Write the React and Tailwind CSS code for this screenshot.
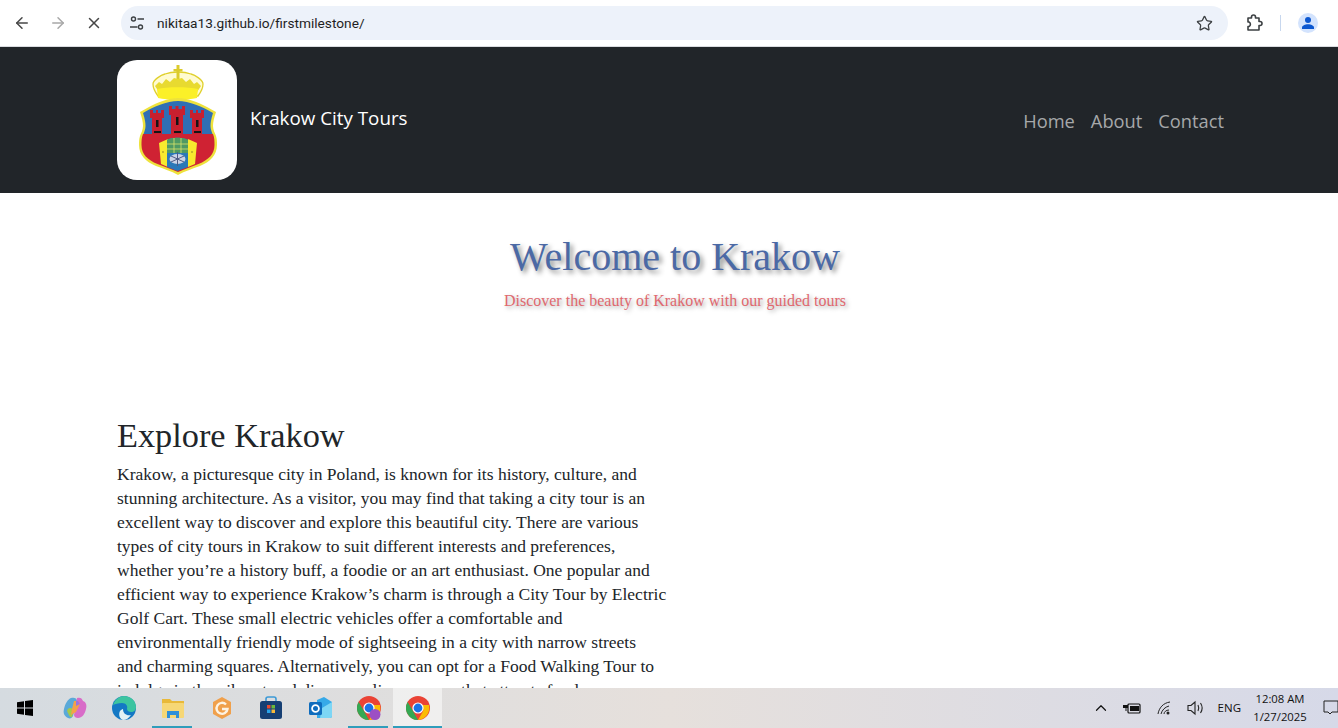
import React from 'react';
import { ArrowLeft, ArrowRight, X, Star, ChevronUp } from 'lucide-react';

const SERIF = "font-['Liberation_Serif',serif]";

const INTRO_LINES = [
  'Krakow, a picturesque city in Poland, is known for its history, culture, and',
  'stunning architecture. As a visitor, you may find that taking a city tour is an',
  'excellent way to discover and explore this beautiful city. There are various',
  'types of city tours in Krakow to suit different interests and preferences,',
  'whether you’re a history buff, a foodie or an art enthusiast. One popular and',
  'efficient way to experience Krakow’s charm is through a City Tour by Electric',
  'Golf Cart. These small electric vehicles offer a comfortable and',
  'environmentally friendly mode of sightseeing in a city with narrow streets',
  'and charming squares. Alternatively, you can opt for a Food Walking Tour to',
  'indulge in the vibrant and diverse culinary scene that attracts food',
];

const TuneIcon = () => (
  <svg width="16" height="16" viewBox="0 0 16 16" fill="none" stroke="#3c4043" strokeWidth="1.4">
    <circle cx="4.5" cy="4" r="2" />
    <path d="M8.5 4H15M1 12h7.5" />
    <circle cx="11.5" cy="12" r="2" />
  </svg>
);

const PuzzleIcon = () => (
  <svg width="18" height="18" viewBox="0 0 18 18" fill="none" stroke="#3c4043" strokeWidth="1.6" strokeLinejoin="round">
    <path d="M2 4h3.5V3a2 2 0 0 1 4 0v1H13v3.5h1a2 2 0 0 1 0 4h-1V16H2v-3.5h1a2.5 2.5 0 0 0 0-4.5H2V4z" />
  </svg>
);

const ProfileIcon = () => (
  <div className="flex h-5 w-5 items-center justify-center rounded-full bg-[#d3e3fd]">
    <svg width="14" height="14" viewBox="0 0 14 14" fill="#0b57d0">
      <circle cx="7" cy="4" r="3" />
      <path d="M1 13v-1.5C1 9.5 4 8.2 7 8.2s6 1.3 6 3.3V13H1z" />
    </svg>
  </div>
);

const BrowserBar = () => (
  <div className="flex h-[46px] shrink-0 items-center bg-white pl-[13px]">
    <ArrowLeft size={18} color="#474747" strokeWidth={2} />
    <ArrowRight size={18} color="#a8a8a8" strokeWidth={2} className="ml-[18px]" />
    <X size={18} color="#474747" strokeWidth={2} className="ml-[18px]" />
    <div className="ml-[18px] flex h-[34px] w-[1107px] items-center rounded-full bg-[#edf2fa] pl-[8px] pr-[15px]">
      <TuneIcon />
      <span className="ml-[12px] font-['Roboto',sans-serif] text-[13.7px] text-[#1f1f1f]">
        nikitaa13.github.io/firstmilestone/
      </span>
      <Star size={17} color="#3c4043" strokeWidth={1.8} className="ml-auto" />
    </div>
    <div className="ml-[18px]"><PuzzleIcon /></div>
    <div className="ml-[16px] h-[16px] w-px bg-[#c7d7ee]" />
    <div className="ml-[17px]"><ProfileIcon /></div>
  </div>
);

const Crest = () => (
  <svg width="120" height="120" viewBox="0 0 120 120">
    <rect width="120" height="120" rx="20" fill="#fff" />
    {/* crown */}
    <path d="M41 36c-3-4-5-9-5-12 0-4 8-9 12-10 4-1.500 8-2 13-2s9 .5 13 2c4 1 12 6 12 10 0 3-2 8-5 12z" fill="#fffbd0" stroke="#e0d02c" strokeWidth="1.300" />
    <path d="M59.500 5h3v4h3v2.500h-3V20h-3v-8.500h-3V9h3z" fill="#dccb2c" />
    <path d="M38 26l4-4 3 2 4-5 4 3 4-4 4 1 4-1 4 4 4-3 4 5 3-2 4 4-4 6H42z" fill="#e8da30" />
    <path d="M40 29c10-2.500 31-2.500 41 0l-1 9c-10 2-30 2-39 0z" fill="#fbf028" />
    {/* shield */}
    <path d="M23 52c3-2 6-3 9-5 9-5 20-9 29-9s20 4 29 9c3 2 6 3 9 5-2 6-3 10-3 14 0 4 2 7 3 10 1 3 1 6 1 9 0 10-7 17-17 21-8 3-15 5-22 9-7-4-14-6-22-9-10-4-17-11-17-21 0-3 0-6 1-9 1-3 3-6 3-10 0-4-1-8-3-14z" fill="#eee23c" />
    <path d="M26 53c10-6 24-12 35-12s25 6 35 12c-2 6-2.500 10-2.500 13 0 3 1 5 2 8H26.500c1-3 2-5 2-8 0-3-.5-7-2.500-13z" fill="#2f6fb4" />
    <path d="M26 74h70c1.500 4 1.500 7 1.500 11 0 9-6 15-16 19-7 3-14 5-20.500 8-6.500-3-13.500-5-20.500-8-10-4-16-10-16-19 0-4 0-7 1.500-11z" fill="#cf2233" />
    {/* towers */}
    <g fill="#c8202f">
      <path d="M33 50h3v3h3v-3h2v3h3v-3h3v8h-2v16H35V58h-2z" />
      <path d="M52 46h3v3h3.500v-3h3v3H65v-3h3v9h-2v19H54V55h-2z" />
      <path d="M73 50h3v3h3v-3h2v3h3v-3h3v8h-2v16H75V58h-2z" />
    </g>
    <g fill="#151515">
      <rect x="39" y="60" width="2.500" height="7" />
      <rect x="59" y="57" width="2.500" height="8" />
      <rect x="79" y="60" width="2.500" height="7" />
      <rect x="37" y="71" width="7" height="2" />
      <rect x="57" y="71" width="7" height="2" />
      <rect x="77" y="71" width="7" height="2" />
    </g>
    {/* gate */}
    <path d="M42 83l9-4v28l-7-3z" fill="#f7ea2e" />
    <path d="M80 83l-9-4v28l7-3z" fill="#f7ea2e" />
    <path d="M50 80c3-3 18-3 21 0v27l-10.500 4L50 107z" fill="#2a78b8" />
    <path d="M50 93V80c3-3 18-3 21 0v13z" fill="#4f9a63" />
    <path d="M50 84h21M50 89h21M57 78v15M64 78v15" stroke="#dbe46a" strokeWidth="0.800" />
    <ellipse cx="60.500" cy="99" rx="8" ry="5" fill="#c9d3e6" />
    <path d="M60.500 92v14M54 96l13 6M67 96l-13 6" stroke="#4d5a85" strokeWidth="1" />
    <circle cx="46" cy="92" r="1" fill="#b5a92a" />
    <circle cx="75" cy="92" r="1" fill="#b5a92a" />
  </svg>
);

const Navbar = () => (
  <nav className="flex h-[146px] items-center bg-[#212529] pl-[117px] pr-[114px]">
    <Crest />
    <span className="ml-[13px] -mt-[3px] font-['Open_Sans',sans-serif] text-[18.8px] text-white">Krakow City Tours</span>
    <div className="ml-auto mt-[1px] flex gap-[16px] font-['Open_Sans',sans-serif] text-[18.3px] text-[#a6a8aa]">
      <a>Home</a>
      <a>About</a>
      <a>Contact</a>
    </div>
  </nav>
);

const Hero = () => (
  <div className={`${SERIF} flex h-[163px] flex-col items-center pl-[12px] pt-[39px]`}>
    <h1 className="text-[40px] leading-[50px] text-[#4b69a5] [text-shadow:3px_3px_5px_rgba(0,0,0,0.45)]">
      Welcome to Krakow
    </h1>
    <p className="mt-[9px] text-[16px] leading-[20px] text-[#e0686e] [text-shadow:2px_2px_4px_rgba(0,0,0,0.35)]">
      Discover the beauty of Krakow with our guided tours
    </p>
  </div>
);

const Explore = () => (
  <section className={`${SERIF} ml-[117px] mt-[57px] w-[560px] text-[#212529]`}>
    <h2 className="text-[34.3px] leading-[44px]">Explore Krakow</h2>
    <p className="mt-[5px] text-[17.5px] leading-[24px]">
      {INTRO_LINES.map((line) => (
        <span key={line} className="block whitespace-nowrap">{line}</span>
      ))}
    </p>
  </section>
);

const TaskIcon = ({ active, current, children }) => (
  <div className={`relative flex h-10 w-[49px] items-center justify-center ${current ? 'bg-white/50' : ''}`}>
    {children}
    {active && (
      <div className={`absolute bottom-0 h-[2px] bg-[#2f9dbb] ${current ? 'left-0 right-0' : 'left-[4px] right-[5px]'}`} />
    )}
  </div>
);

const ChromeLogo = ({ badge }) => (
  <svg width="24" height="24" viewBox="0 0 24 24">
    <circle cx="12" cy="12" r="12" fill="#ea4335" />
    <path d="M12 24A12 12 0 0 1 1.600 6L7 15l5 9z" fill="#34a853" />
    <path d="M12 24l5.200-9-.5-6h6.200A12 12 0 0 1 12 24z" fill="#fbbc04" />
    <circle cx="12" cy="12" r="5.600" fill="#fff" />
    <circle cx="12" cy="12" r="4.400" fill="#1a73e8" />
    {badge && <circle cx="18" cy="18.500" r="5.500" fill="#9c4fc4" />}
  </svg>
);

const Taskbar = () => (
  <footer className="flex h-10 shrink-0 items-center bg-gradient-to-r from-[#d5dbe0] via-[#e6e0dc] to-[#d6d9e8]">
    <div className="flex w-[50px] items-center justify-center">
      <svg width="16" height="16" viewBox="0 0 16 16" fill="#000">
        <path d="M0 2.200l7-1V7.600H0zM8 1l8-1v7.600H8zM0 8.400h7v6.400l-7-1zM8 8.400h8V16l-8-1.100z" />
      </svg>
    </div>
    <div className="flex">
      <TaskIcon>
        <svg width="24" height="24" viewBox="0 0 24 24">
          <path d="M8 2c3-1 6 0 6 3L10 20c-1 2-3 3-5 2-4-2-5-5-4-9 1-5 4-10 7-11z" fill="#5aa9d8" />
          <path d="M5 17c-2-3 0-5 3-5l3 2-2 7c-2 1-3-2-4-4z" fill="#a6c94a" />
          <path d="M14 2c3-1 5 0 6 3 3 1 4 4 3 8-1 5-4 9-8 9-2 0-4-1-4-3z" fill="#d86cc8" />
          <path d="M11 5h4l2 3-4 8-5 3 1-6z" fill="#f4a14a" />
          <path d="M13 5h2l2 3-4 2z" fill="#9a72e0" />
        </svg>
      </TaskIcon>
      <TaskIcon>
        <svg width="24" height="24" viewBox="0 0 24 24">
          <circle cx="12" cy="12" r="12" fill="#1478c4" />
          <path d="M1 9C3 3 8 0 12 0c7 0 12 5 12 11 0 3-2 5-5 5-2 0-4-1-4-3 1-3-1-6-5-6-4 0-7 1-9 2z" fill="#3cc4a0" />
          <path d="M11 13c0 5 4 7 8 6-2 3-5 5-8 5-3-1-5-5-3-9 1-1 2-2 3-2z" fill="#e4f2f4" />
        </svg>
      </TaskIcon>
      <TaskIcon active>
        <svg width="24" height="22" viewBox="0 0 24 22">
          <path d="M1 2h8l2 2h12v4H1z" fill="#e8b93a" />
          <rect x="1" y="6" width="22" height="15" rx="1" fill="#f6d776" />
          <path d="M6 14h12v7h-3v-3H9v3H6z" fill="#2f8fd8" />
        </svg>
      </TaskIcon>
      <TaskIcon>
        <svg width="22" height="24" viewBox="0 0 22 24" fill="none">
          <path d="M11 1l9 5v12l-9 5-9-5V6z" fill="#f0a04b" />
          <path d="M15 8.500A5.500 5.500 0 1 0 16.500 13H11" stroke="#fdf3e3" strokeWidth="2.400" />
        </svg>
      </TaskIcon>
      <TaskIcon>
        <svg width="24" height="24" viewBox="0 0 24 24">
          <path d="M7 5V3a2 2 0 0 1 2-2h6a2 2 0 0 1 2 2v2" fill="none" stroke="#3d9ad6" strokeWidth="1.600" />
          <rect x="1" y="5" width="22" height="18" rx="2.500" fill="#163f73" />
          <rect x="8" y="9" width="3.500" height="3.500" fill="#e8492f" />
          <rect x="12.500" y="9" width="3.500" height="3.500" fill="#6cb83a" />
          <rect x="8" y="13.500" width="3.500" height="3.500" fill="#2aa3e8" />
          <rect x="12.500" y="13.500" width="3.500" height="3.500" fill="#f6b93b" />
        </svg>
      </TaskIcon>
      <TaskIcon>
        <svg width="24" height="24" viewBox="0 0 24 24">
          <path d="M9 4l7-3 8 5v14a2 2 0 0 1-2 2H9z" fill="#36a9e8" />
          <path d="M14 12l10-6v14a2 2 0 0 1-2 2H12z" fill="#7dd6f5" />
          <rect x="1" y="6" width="13" height="13" rx="1.500" fill="#0f6cbd" />
          <circle cx="7.500" cy="12.500" r="3.400" fill="none" stroke="#fff" strokeWidth="1.800" />
        </svg>
      </TaskIcon>
      <TaskIcon active><ChromeLogo badge /></TaskIcon>
      <TaskIcon active current><ChromeLogo /></TaskIcon>
    </div>
    <div className="ml-auto flex items-center font-['Open_Sans',sans-serif] text-[#111]">
      <ChevronUp size={18} strokeWidth={1.600} />
      <svg width="18" height="12" viewBox="0 0 18 12" className="ml-[13px]" fill="#111">
        <rect x="5" y="2" width="12" height="9" rx="1" fill="none" stroke="#111" strokeWidth="1.200" />
        <rect x="7" y="4" width="9" height="5" />
        <path d="M0 3h5v3H3.500v3h-1V6H0z" />
      </svg>
      <svg width="16" height="16" viewBox="0 0 16 16" className="ml-[16px]" fill="none" stroke="#222" strokeWidth="1">
        <path d="M1 14C2 8 6 3 13 2M4 14c1-4 4-7 8-8M7 14c0-2 2-4 5-4" />
        <circle cx="11" cy="13" r="1.500" fill="#222" stroke="none" />
      </svg>
      <svg width="18" height="16" viewBox="0 0 18 16" className="ml-[14px]" fill="none" stroke="#222" strokeWidth="1.100">
        <path d="M1 5.500h3L8 2v12l-4-3.500H1zM11 5c1 2 1 4 0 6M13.500 3c2 3 2 7 0 10" />
      </svg>
      <span className="ml-[13px] text-[11.5px]">ENG</span>
      <div className="ml-[13px] flex w-[52px] flex-col items-center text-[11.3px] leading-[18px]">
        <span className="whitespace-nowrap">12:08 AM</span>
        <span className="whitespace-nowrap">1/27/2025</span>
      </div>
      <svg width="15" height="16" viewBox="0 0 15 16" className="ml-[17px]" fill="none" stroke="#222" strokeWidth="1">
        <path d="M1 1h14v11H9l-2 2-2-2H1z" />
      </svg>
    </div>
  </footer>
);

export default function App() {
  return (
    <div className="flex h-[728px] w-[1338px] flex-col overflow-hidden bg-white">
      <BrowserBar />
      <div className="h-px shrink-0 bg-[#dadce0]" />
      <main className="min-h-0 flex-1 overflow-hidden">
        <Navbar />
        <Hero />
        <Explore />
      </main>
      <Taskbar />
    </div>
  );
}
